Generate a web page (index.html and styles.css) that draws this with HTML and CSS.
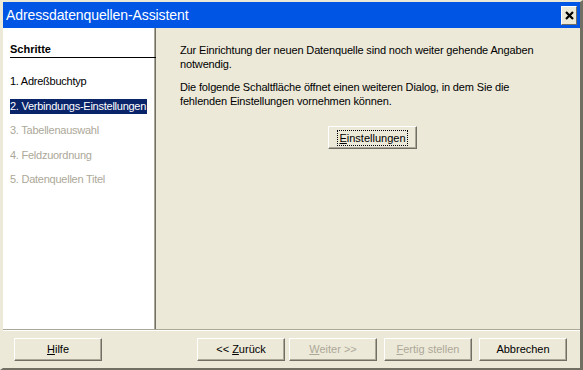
FILE: index.html
```html
<!DOCTYPE html>
<html lang="de">

<head>
    <meta charset="UTF-8">
    <title>Adressdatenquellen-Assistent</title>
    <link rel="stylesheet" href="styles.css">
</head>

<body>
    <div class="window">
        <div class="titlebar">
            <span class="title">Adressdatenquellen-Assistent</span>
            <button class="close" aria-label="Schließen">
                <svg width="9" height="9" viewBox="0 0 9 9">
                    <path d="M1 1 L8 8 M8 1 L1 8" stroke="#000" stroke-width="2.2" />
                </svg>
            </button>
        </div>

        <div class="main">
            <div class="steps">
                <div class="steps-head">Schritte</div>
                <ul class="step-list">
                    <li class="step">1. Adreßbuchtyp</li>
                    <li class="step active">2. Verbindungs-Einstellungen</li>
                    <li class="step disabled">3. Tabellenauswahl</li>
                    <li class="step disabled">4. Feldzuordnung</li>
                    <li class="step disabled">5. Datenquellen Titel</li>
                </ul>
            </div>

            <div class="content">
                <p>Zur Einrichtung der neuen Datenquelle sind noch weiter gehende Angaben notwendig.</p>
                <p>Die folgende Schaltfläche öffnet einen weiteren Dialog, in dem Sie die fehlenden Einstellungen vornehmen können.</p>
                <div class="center">
                    <button class="btn focus"><span class="focus-ring"><u>E</u>instellungen</span></button>
                </div>
            </div>
        </div>

        <div class="footer">
            <button class="btn"><u>H</u>ilfe</button>
            <div class="nav">
                <button class="btn">&lt;&lt; <u>Z</u>urück</button>
                <button class="btn" disabled><u>W</u>eiter &gt;&gt;</button>
                <button class="btn wide-gap" disabled><u>F</u>ertig stellen</button>
                <button class="btn wide-gap">Abbrechen</button>
            </div>
        </div>
    </div>
</body>

</html>
```

FILE: styles.css
```css
html, body {
    margin: 0;
    padding: 0;
    background: #ece9d8;
}

body {
    font-family: "Liberation Sans", Arial, sans-serif;
    font-size: 11px;
    color: #000;
}

.window {
    width: 583px;
    height: 370px;
    box-sizing: border-box;
    display: flex;
    flex-direction: column;
    background: #ece9d8;
    border-top: 2px solid #ece9d8;
    border-left: 3px solid #ece9d8;
    border-right: 3px solid #716f64;
    border-bottom: 2px solid #716f64;
}

.titlebar {
    height: 26px;
    background: #0055e5;
    display: flex;
    align-items: center;
    justify-content: space-between;
    padding: 0 3px 0 3px;
    flex-shrink: 0;
}

.title {
    color: #fff;
    font-size: 14px;
    letter-spacing: -0.1px;
}

.close {
    width: 16px;
    height: 19px;
    padding: 0;
    margin-top: 1px;
    background: #ece9d8;
    border: 1px solid;
    border-color: #fff #716f64 #716f64 #fff;
    display: flex;
    align-items: center;
    justify-content: center;
}

.main {
    flex: 1;
    display: flex;
    border-bottom: 1px solid #aca899;
    box-shadow: 0 1px 0 #fff;
}

.steps {
    width: 152px;
    background: #fff;
    border-right: 1px solid #aca899;
    box-shadow: 1px 0 0 #716f64;
    margin-right: 1px;
    padding: 14px 0 0 7px;
    box-sizing: border-box;
}

.steps-head {
    font-weight: bold;
    border-bottom: 1px solid #000;
    padding: 1px 0 2px 0;
    margin-right: -2px;
}

.step-list {
    list-style: none;
    margin: 16px 0 0 0;
    padding: 0;
}

.step {
    height: 15px;
    line-height: 15px;
    margin-bottom: 9.5px;
    white-space: nowrap;
    letter-spacing: -0.25px;
}

.step.active {
    background: #0a246a;
    color: #fff;
    width: fit-content;
    padding-right: 1px;
}

.step.disabled {
    color: #aca899;
}

.content {
    flex: 1;
    padding: 15px 39px 0 24px;
    letter-spacing: -0.15px;
}

.content p {
    margin: 0 0 9px 0;
    line-height: 14px;
}

.center {
    display: flex;
    justify-content: center;
    padding-top: 9px;
    padding-left: 24px;
}

.btn {
    width: 88px;
    height: 23px;
    font-family: inherit;
    font-size: 11px;
    color: #000;
    background: #ece9d8;
    border: 1px solid;
    border-color: #fff #716f64 #716f64 #fff;
    box-shadow: inset -1px -1px 0 #aca899;
    padding: 0;
}

.btn:disabled {
    color: #aca899;
}

.btn.focus {
    width: 89px;
}

.focus-ring {
    outline: 1px dotted #000;
    padding: 1px 1px;
}

.footer {
    height: 38px;
    display: flex;
    align-items: center;
    justify-content: space-between;
    padding: 0 13px 0 11px;
    flex-shrink: 0;
}

.nav {
    display: flex;
    gap: 4px;
}

.nav .wide-gap {
    margin-left: 3px;
}
```
